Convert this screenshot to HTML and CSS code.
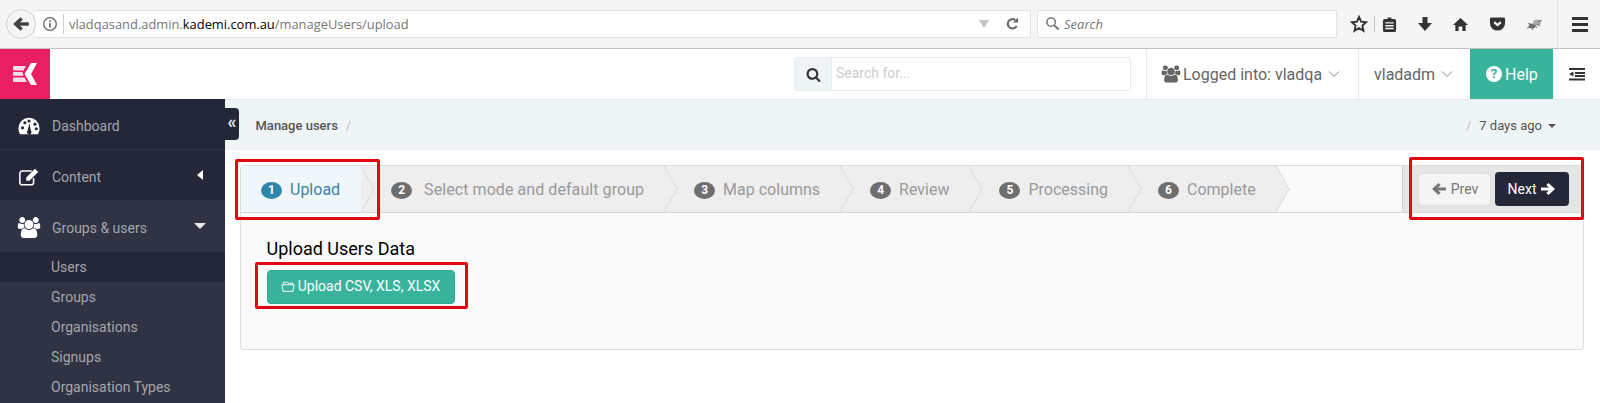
FILE: index.html
```html
<!DOCTYPE html>
<html lang="en">
<head>
<meta charset="utf-8">
<title>Manage users</title>
<link rel="stylesheet" href="styles.css">
</head>
<body>
<svg class="defs" width="0" height="0" aria-hidden="true">
  <symbol id="i-users" viewBox="0 0 2048 1792"><path d="M657 896q-162 5-265 128h-134q-82 0-138-40.500t-56-118.500q0-353 124-353 6 0 43.500 21t97.500 42.500 119 21.500q67 0 133-23-5 37-5 66 0 139 81 256zm1071 637q0 120-73 189.500t-194 69.500h-874q-121 0-194-69.500t-73-189.500q0-53 3.500-103.500t14-109 26.500-108.500 43-97.500 62-81 85.500-53.500 111.500-20q10 0 43 21.500t73 48 107 48 135 21.500 135-21.500 107-48 73-48 43-21.500q61 0 111.500 20t85.500 53.500 62 81 43 97.500 26.500 108.500 14 109 3.500 103.500zm-1024-1277q0 106-75 181t-181 75-181-75-75-181 75-181 181-75 181 75 75 181zm704 384q0 159-112.500 271.500t-271.500 112.500-271.500-112.500-112.500-271.500 112.500-271.500 271.500-112.500 271.500 112.500 112.500 271.500zm576 225q0 78-56 118.500t-138 40.500h-134q-103-123-265-128 81-117 81-256 0-29-5-66 66 23 133 23 59 0 119-21.500t97.500-42.500 43.500-21q124 0 124 353zm-128-609q0 106-75 181t-181 75-181-75-75-181 75-181 181-75 181 75 75 181z"/></symbol>
  <symbol id="i-search" viewBox="0 0 1792 1792"><path d="M1216 832q0-185-131.500-316.500t-316.500-131.500-316.500 131.500-131.500 316.500 131.500 316.500 316.500 131.500 316.500-131.500 131.500-316.500zm512 832q0 52-38 90t-90 38q-54 0-90-38l-343-342q-179 124-399 124-143 0-273.500-55.500t-225-150-150-225-55.500-273.500 55.500-273.500 150-225 225-150 273.500-55.500 273.500 55.500 225 150 150 225 55.500 273.500q0 220-124 399l343 343q37 37 37 90z"/></symbol>
  <symbol id="i-left" viewBox="0 0 16 16"><path d="M1 8 7.500 2 9.700 4.200 7 6.400H15V9.600H7L9.700 11.800 7.500 14Z"/></symbol>
  <symbol id="i-right" viewBox="0 0 16 16"><path d="M15 8 8.500 2 6.300 4.200 9 6.400H1V9.600H9L6.300 11.800 8.500 14Z"/></symbol>
  <symbol id="i-down" viewBox="0 0 12 8"><path d="M1 1.500 6 6.500 11 1.500" fill="none" stroke="currentColor" stroke-width="1"/></symbol>
  <symbol id="i-tip" viewBox="0 0 14 46" preserveAspectRatio="none"><path class="tip-fill" d="M0 0 13 23 0 46Z"/><path d="M0 0 13 23 0 46" fill="none" stroke="#d9d9d9" stroke-width="1"/></symbol>
</svg>

<div class="browser">
  <div class="back">
    <svg class="back-arrow" viewBox="0 0 16 16"><use href="#i-left"/></svg>
  </div>
  <div class="urlbar">
    <svg class="info" viewBox="0 0 16 16"><circle cx="8" cy="8" r="6.300" fill="none" stroke="#666" stroke-width="1.300"/><rect x="7.200" y="7" width="1.600" height="4.500" fill="#666"/><rect x="7.200" y="4.300" width="1.600" height="1.600" fill="#666"/></svg>
    <span class="url"><span class="url-dim">vladqasand.admin.</span>kademi.com.au<span class="url-dim">/manageUsers/upload</span></span>
    <span class="url-caret"></span>
    <svg class="reload" viewBox="0 0 16 16"><path d="M12.500 10.500A5 5 0 1 1 11 4.300" fill="none" stroke="#666" stroke-width="2.200"/><path d="M8.500 6.800 14 7V1.500Z" fill="#666"/></svg>
  </div>
  <div class="websearch">
    <svg class="websearch-icon" viewBox="0 0 16 16"><circle cx="6.500" cy="6.500" r="4.500" fill="none" stroke="#777" stroke-width="1.600"/><path d="M10 10 14.500 14.500" stroke="#777" stroke-width="2.200"/></svg>
    <span>Search</span>
  </div>
  <div class="tools">
    <svg class="tool tool-star" viewBox="0 0 18 18"><path d="M9 2 11.100 6.700 16.200 7.200 12.400 10.600 13.500 15.700 9 13 4.500 15.700 5.600 10.600 1.800 7.200 6.900 6.700Z" fill="none" stroke="#333" stroke-width="1.900"/></svg>
    <span class="tool-sep"></span>
    <svg class="tool tool-clip" viewBox="0 0 16 18"><path d="M3 3H6V1.500H10V3H13A2 2 0 0 1 15 5V15A2 2 0 0 1 13 17H3A2 2 0 0 1 1 15V5A2 2 0 0 1 3 3ZM3.500 6.500V8H12.500V6.500ZM3.500 9.500V11H12.500V9.500ZM3.500 12.500V14H12.500V12.500Z" fill="#333" fill-rule="evenodd"/></svg>
    <svg class="tool tool-dl" viewBox="0 0 16 16"><path d="M5.500 1H10.500V7H15L8 15 1 7H5.500Z" fill="#333"/></svg>
    <svg class="tool tool-home" viewBox="0 0 18 16"><path d="M9 1 17 8.500H14.500V15H11V10H7V15H3.500V8.500H1Z" fill="#333"/></svg>
    <svg class="tool tool-pocket" viewBox="0 0 18 16"><path d="M2.500 1H15.500A1.500 1.500 0 0 1 17 2.500V7A8 8 0 0 1 1 7V2.500A1.500 1.500 0 0 1 2.500 1Z" fill="#333"/><path d="M5.500 6 9 9.200 12.500 6" fill="none" stroke="#f5f5f5" stroke-width="2.200"/></svg>
    <svg class="tool tool-bug" viewBox="0 0 18 14"><ellipse cx="6" cy="9" rx="3.500" ry="2.500" fill="#777"/><ellipse cx="11" cy="5.500" rx="4" ry="3" fill="#aaa"/><path d="M2 6 6 8M1 11 5 10M6 13 8 9M11 11 9 8M14 9 11 7M16 3 12 5" stroke="#555" stroke-width=".8"/></svg>
    <span class="tool-sep tool-sep-tall"></span>
    <div class="burger"><span></span><span></span><span></span></div>
  </div>
</div>

<header class="topbar">
  <div class="logo">
    <svg class="logo-mark" viewBox="0 0 24 22"><path d="M24 0 18 11 24 22H18L11.500 11 18 0Z" fill="#fff"/><path d="M0 3H13L10.500 7.500H0ZM0 9H9.500L10.500 12.800H0ZM0 14.500H11.500L14 19H0Z" fill="#fbdbe6"/></svg>
  </div>
  <div class="topsearch">
    <span class="topsearch-addon"><svg class="topsearch-icon" viewBox="0 0 1792 1792"><use href="#i-search"/></svg></span>
    <span class="topsearch-input">Search for...</span>
  </div>
  <div class="topitem topitem-org">
    <svg class="org-icon" viewBox="0 0 2048 1792"><use href="#i-users"/></svg>
    <span>Logged into: vladqa</span>
    <svg class="chev" viewBox="0 0 12 8"><use href="#i-down"/></svg>
  </div>
  <div class="topitem topitem-user">
    <span>vladadm</span>
    <svg class="chev" viewBox="0 0 12 8"><use href="#i-down"/></svg>
  </div>
  <div class="help"><span class="help-q">?</span><span>Help</span></div>
  <div class="outdent">
    <svg class="outdent-icon" viewBox="0 0 16 14"><path d="M0 1H16V3H0ZM6 5H16V7H6ZM6 8H16V10H6ZM0 11.500H16V13.500H0ZM4.500 4.500V9.500L0 7Z" fill="#333"/></svg>
  </div>
</header>

<div class="app">
  <nav class="sidebar">
    <a class="nav nav-first">
      <svg class="nav-icon" viewBox="0 0 24 20"><path d="M12 1A11.500 11.500 0 0 1 23.500 12.500C23.500 15 22.800 17 21.800 19H2.200C1.200 17 .5 15 .5 12.500A11.500 11.500 0 0 1 12 1Z" fill="#fff"/><circle cx="5" cy="12" r="1.700" fill="#232738"/><circle cx="7.500" cy="6.500" r="1.700" fill="#232738"/><circle cx="12" cy="4.500" r="1.700" fill="#232738"/><circle cx="18.500" cy="8" r="1.700" fill="#232738"/><circle cx="20" cy="13" r="1.700" fill="#232738"/><path d="M12.500 7 14 15A2.500 2.500 0 1 1 10.500 15Z" fill="#232738"/></svg>
      <span>Dashboard</span>
    </a>
    <a class="nav">
      <svg class="nav-icon" viewBox="0 0 24 20"><path d="M17 11V16A2.500 2.500 0 0 1 14.500 18.500H4.500A2.500 2.500 0 0 1 2 16V6A2.500 2.500 0 0 1 4.500 3.500H15" fill="none" stroke="#fff" stroke-width="1.700"/><path d="M9 10.500 18.500 1 22 4.500 12.500 14H9Z" fill="#fff"/></svg>
      <span>Content</span>
      <span class="caret-left"></span>
    </a>
    <a class="nav nav-open">
      <svg class="nav-icon nav-icon-users" viewBox="0 0 2048 1792"><use href="#i-users"/></svg>
      <span>Groups &amp; users</span>
      <span class="caret-down"></span>
    </a>
    <a class="sub sub-active">Users</a>
    <a class="sub">Groups</a>
    <a class="sub">Organisations</a>
    <a class="sub">Signups</a>
    <a class="sub">Organisation Types</a>
  </nav>
  <span class="collapse">«</span>

  <main class="main">
    <div class="crumbs">
      <span class="crumb-title">Manage users</span>
      <span class="crumb-slash">/</span>
      <span class="crumb-spacer"></span>
      <span class="crumb-slash">/</span>
      <span class="crumb-range">7 days ago</span>
      <span class="crumb-caret"></span>
    </div>
    <div class="content">
      <section class="wizard">
        <div class="wizard-bar">
          <ol class="steps">
            <li class="step step-active"><span class="badge">1</span><span>Upload</span><svg class="tip"><use href="#i-tip"/></svg></li>
            <li class="step step-long"><span class="badge">2</span><span>Select mode and default group</span><svg class="tip"><use href="#i-tip"/></svg></li>
            <li class="step"><span class="badge">3</span><span>Map columns</span><svg class="tip"><use href="#i-tip"/></svg></li>
            <li class="step"><span class="badge">4</span><span>Review</span><svg class="tip"><use href="#i-tip"/></svg></li>
            <li class="step"><span class="badge">5</span><span>Processing</span><svg class="tip"><use href="#i-tip"/></svg></li>
            <li class="step"><span class="badge">6</span><span>Complete</span><svg class="tip"><use href="#i-tip"/></svg></li>
          </ol>
          <div class="actions">
            <button class="btn btn-prev"><svg class="arrow" viewBox="0 0 16 16"><use href="#i-left"/></svg>Prev</button>
            <button class="btn btn-next">Next<svg class="arrow" viewBox="0 0 16 16"><use href="#i-right"/></svg></button>
          </div>
        </div>
        <div class="wizard-body">
          <h4 class="wizard-title">Upload Users Data</h4>
          <button class="btn-upload">
            <svg class="folder" viewBox="0 0 16 14"><path d="M2.500 4V2.200H7L8 3.200H13.500V5M1 5H15L13.500 12.500H2.500Z" fill="none" stroke="#fff" stroke-width="1.100" stroke-linejoin="round"/></svg>
            Upload CSV, XLS, XLSX
          </button>
        </div>
      </section>
    </div>
  </main>
</div>

<span class="mark mark-step"></span>
<span class="mark mark-upload"></span>
<span class="mark mark-actions"></span>
</body>
</html>
```

FILE: styles.css
```css
* { box-sizing: border-box; }
html, body { margin: 0; height: 403px; overflow: hidden; background: #fff; }
body { font-family: Roboto, "Liberation Sans", sans-serif; font-size: 14px; color: #555; position: relative; }
.defs { position: absolute; }

/* browser chrome */
.browser { height: 49px; background: #f5f5f5; border-bottom: 1px solid #c2c2c2; display: flex; align-items: center; padding: 0 0 0 6px; position: relative; font-family: "Open Sans", sans-serif; }
.back { width: 30px; height: 30px; border-radius: 50%; background: #f5f5f5; border: 1px solid #cfcfcf; display: flex; align-items: center; justify-content: center; margin-right: -1px; z-index: 1; flex: none; }
.back-arrow { width: 18px; height: 18px; fill: #444; }
.urlbar { width: 996px; height: 28px; margin-bottom: 1px; background: #fff; border: 1px solid #e4e4e4; border-left: 0; display: flex; align-items: center; flex: none; }
.info { width: 16px; height: 16px; margin-left: 7px; flex: none; }
.url { margin-left: 5px; padding-left: 5px; border-left: 1px solid #ccc; font-size: 12.900px; line-height: 20px; color: #000; white-space: nowrap; }
.url-dim { color: #777; }
.url-caret { margin-left: auto; width: 0; height: 0; border-left: 5px solid transparent; border-right: 5px solid transparent; border-top: 8px solid #c4c4c4; position: relative; left: 3px; }
.reload { width: 15px; height: 15px; margin-left: 19px; margin-right: 10px; flex: none; }
.websearch { margin-left: 6px; width: 300px; height: 28px; margin-bottom: 1px; background: #fff; border: 1px solid #e4e4e4; display: flex; align-items: center; font-size: 13px; font-style: italic; color: #777; flex: none; }
.websearch-icon { width: 15px; height: 15px; margin-left: 7px; margin-right: 4px; }
.tools { display: flex; align-items: center; margin-left: 13px; flex: 1; height: 48px; }
.tool { flex: none; }
.tool-star { width: 18px; height: 18px; }
.tool-sep { width: 1px; height: 16px; background: #c8c8c8; margin: 0 7px 0 6px; flex: none; }
.tool-clip { width: 15px; height: 17px; }
.tool-dl { width: 16px; height: 16px; margin-left: 20px; }
.tool-home { width: 17px; height: 15px; margin-left: 19px; }
.tool-pocket { width: 17px; height: 16px; margin-left: 20px; }
.tool-bug { width: 18px; height: 14px; margin-left: 20px; }
.tool-sep-tall { height: 48px; background: #e4e4e4; margin: 0 14px 0 13px; }
.burger { display: flex; flex-direction: column; gap: 3px; width: 16px; }
.burger span { height: 3px; background: #333; display: block; }

/* top bar */
.topbar { height: 50px; display: flex; align-items: stretch; background: #fff; font-size: 16px; color: #666; }
.logo { width: 50px; background: #e91e63; display: flex; align-items: center; justify-content: center; flex: none; }
.logo-mark { width: 24px; height: 22px; }
.topsearch { margin: 8px 15px 0 auto; width: 337px; height: 34px; display: flex; border: 1px solid #e6ecef; border-radius: 3px; }
.topsearch-addon { width: 37px; background: #eff4f7; border-right: 1px solid #e3eaee; display: flex; align-items: center; justify-content: center; }
.topsearch-icon { width: 15px; height: 15px; fill: #333; }
.topsearch-input { padding-left: 4px; font-size: 14px; line-height: 31px; color: #ccc; }
.topitem { border-left: 1px solid #e6ecef; display: flex; align-items: center; }
.topitem-org { width: 212px; padding-left: 14px; }
.topitem-user { width: 112px; padding-left: 15px; }
.org-icon { width: 20px; height: 18px; fill: #666; margin-right: 2px; }
.chev { width: 12px; height: 8px; color: #888; margin-left: 6px; }
.help { width: 83px; background: #37b49b; color: #fff; display: flex; align-items: center; padding-left: 16px; gap: 3px; flex: none; }
.help-q { width: 16px; height: 16px; border-radius: 50%; background: #fff; color: #37b49b; font-size: 13px; font-weight: 700; line-height: 16px; text-align: center; }
.outdent { width: 47px; flex: none; display: flex; align-items: center; justify-content: center; }
.outdent-icon { width: 16px; height: 14px; }

/* app */
.app { display: flex; height: 304px; position: relative; }
.sidebar { width: 225px; background: #2f3343; flex: none; overflow: hidden; color: #a4a6ae; }
.nav { display: flex; align-items: center; height: 50px; background: #232738; padding: 3px 0 0 18px; position: relative; }
.nav-first { height: 51px; border-bottom: 1px solid #31354a; }
.nav-open { background: #2f3343; height: 52px; }
.nav-icon { width: 22px; height: 20px; margin-right: 12px; flex: none; }
.nav-icon-users { width: 24px; height: 21px; fill: #fff; margin-left: -1px; margin-right: 11px; }
.caret-left { position: absolute; left: 197px; top: 20px; border-top: 5px solid transparent; border-bottom: 5px solid transparent; border-right: 6px solid #fff; }
.caret-down { position: absolute; left: 194px; top: 23px; border-left: 6px solid transparent; border-right: 6px solid transparent; border-top: 6px solid #e8e8e8; }
.sub { display: block; height: 30px; line-height: 30px; padding-left: 51px; }
.sub-active { background: #232738; }
.collapse { position: absolute; left: 225px; top: 9px; width: 14px; height: 32px; background: #232738; border-radius: 0 4px 4px 0; color: #e8e8e8; font-size: 18px; font-weight: 700; line-height: 28px; text-align: center; }

.main { flex: 1; min-width: 0; }
.crumbs { height: 51px; background: #eff4f7; border-top: 1px solid #e2eaee; border-bottom: 1px solid #e8eef1; display: flex; align-items: center; padding: 2px 44px 0 30.500px; font-size: 13px; color: #555; }
.crumb-title { font-weight: 500; }
.crumb-slash { color: #bbb; margin-left: 8px; }
.crumb-spacer { flex: 1; }
.crumb-range { margin-left: 8px; }
.crumb-caret { margin-left: 6px; border-left: 4px solid transparent; border-right: 4px solid transparent; border-top: 4px solid #555; }

.content { padding: 15px 16px 0 15px; }
.wizard { border: 1px solid #dcdcdc; border-radius: 4px; background: #fafafa; height: 185px; }
.wizard-bar { display: flex; height: 47px; border-bottom: 1px solid #d4d4d4; background: #f9f9f9; }
.steps { list-style: none; margin: 0; padding: 0; display: flex; flex: 1; }
.step { position: relative; display: flex; align-items: center; height: 46px; background: #eee; color: #999; font-size: 16px; padding: 0 20px 0 30px; white-space: nowrap; }
.step-active { background: #eff7fb; color: #3e83a8; padding: 0 21px 0 20px; border-radius: 3px 0 0 0; }
.step-long { letter-spacing: .07px; }
.step-long .badge { margin-right: 12px; }
.badge { width: 21px; height: 17px; border-radius: 50%; background: #6e6e6e; color: #fff; font-size: 12px; font-weight: 700; line-height: 17px; text-align: center; margin: 3px 8px 0 0; flex: none; }
.step-active .badge { background: #2e86ab; }
.tip { position: absolute; left: 100%; top: 0; width: 14px; height: 46px; z-index: 1; }
.tip-fill { fill: #eee; }
.step-active .tip-fill { fill: #eff7fb; }
.actions { width: 181px; background: #e5e5e5; border-left: 1px solid #d4d4d4; display: flex; align-items: center; padding-left: 15px; gap: 4px; height: 46px; }
.btn { font-family: inherit; font-size: 14px; height: 33px; border-radius: 4px; display: flex; align-items: center; justify-content: center; gap: 4px; padding: 0; border: 1px solid transparent; }
.btn-prev { width: 73px; background: #f5f5f5; border-color: #dedede; color: #777; font-weight: 400; }
.btn-next { width: 74px; background: #232738; color: #fff; height: 34px; font-weight: 400; }
.arrow { width: 16px; height: 16px; fill: currentColor; }
.wizard-body { padding: 24px 25.500px 0; }
.wizard-title { margin: 0 0 9px; font-size: 18px; font-weight: 400; line-height: 24px; color: #000; }
.btn-upload { font-family: inherit; font-size: 14px; font-weight: 400; color: #fff; background: #37b49b; border: 1px solid #33a58e; border-radius: 4px; height: 34px; width: 188px; display: flex; align-items: center; justify-content: center; gap: 3px; padding: 0 0 2px; }
.folder { width: 14px; height: 13px; flex: none; }

/* annotation rectangles drawn over the page */
.mark { position: absolute; border: 3px solid #e30613; border-radius: 2px; z-index: 5; pointer-events: none; }
.mark-step { left: 235px; top: 159px; width: 145px; height: 61px; }
.mark-upload { left: 255px; top: 262px; width: 213px; height: 47px; }
.mark-actions { left: 1409px; top: 157px; width: 175px; height: 63px; }
```
